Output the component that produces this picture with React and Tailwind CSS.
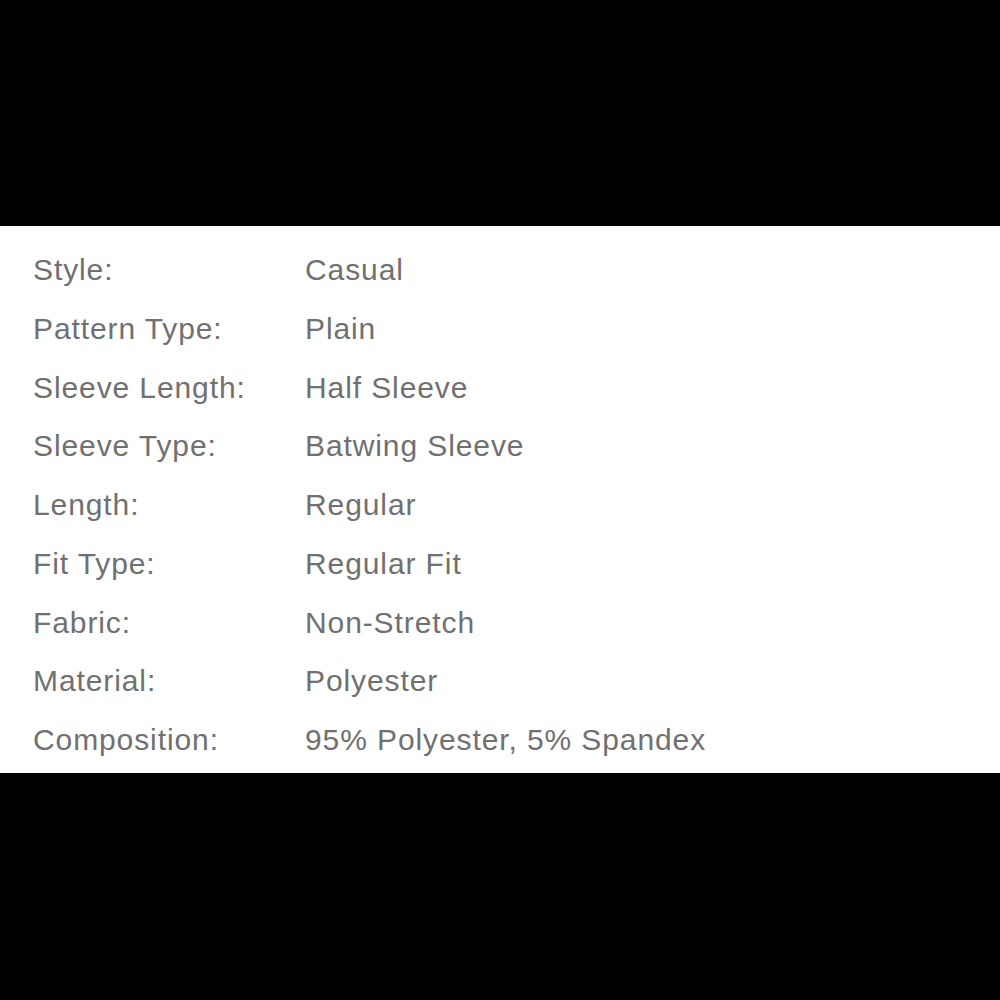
import React from "react";

const specs = [
  ["Style:", "Casual"],
  ["Pattern Type:", "Plain"],
  ["Sleeve Length:", "Half Sleeve"],
  ["Sleeve Type:", "Batwing Sleeve"],
  ["Length:", "Regular"],
  ["Fit Type:", "Regular Fit"],
  ["Fabric:", "Non-Stretch"],
  ["Material:", "Polyester"],
  ["Composition:", "95% Polyester, 5% Spandex"],
];

export default function App() {
  return (
    <div className="w-[1000px] h-[1000px] bg-black flex flex-col">
      <div className="h-[226px]" />
      {/* spec table */}
      <div className="bg-white pt-[15px] pb-[3px] font-['Liberation_Sans',Arial,sans-serif] text-[30px] tracking-[0.9px] text-[#707070]">
        {specs.map(([k, v]) => (
          <div key={k} className="flex leading-[58.75px]">
            <span className="w-[305px] pl-[33px]">{k}</span>
            <span>{v}</span>
          </div>
        ))}
      </div>
    </div>
  );
}
